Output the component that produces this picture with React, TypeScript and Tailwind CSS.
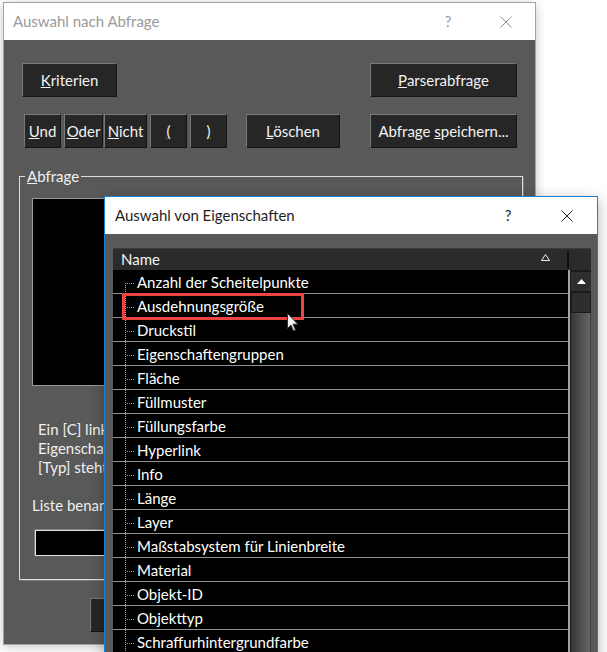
import type { ReactNode } from "react";

const PROPERTIES = [
  "Anzahl der Scheitelpunkte",
  "Ausdehnungsgröße",
  "Druckstil",
  "Eigenschaftengruppen",
  "Fläche",
  "Füllmuster",
  "Füllungsfarbe",
  "Hyperlink",
  "Info",
  "Länge",
  "Layer",
  "Maßstabsystem für Linienbreite",
  "Material",
  "Objekt-ID",
  "Objekttyp",
  "Schraffurhintergrundfarbe",
  "Schraffurmuster",
];

function Btn({ className, children }: { className: string; children: ReactNode }) {
  return (
    <div
      className={`h-[34px] shrink-0 flex items-center justify-center whitespace-nowrap bg-[#262626] border border-t-[#737b7b] border-l-[#737b7b] border-r-[#141414] border-b-[#141414] text-[15px] text-[#f2f2f2] ${className}`}
    >
      <span>{children}</span>
    </div>
  );
}

function CloseIcon({ color }: { color: string }) {
  return (
    <svg width="12" height="12" viewBox="0 0 12 12">
      <path d="M0.5 0.5 L11.5 11.5 M11.5 0.5 L0.5 11.5" stroke={color} strokeWidth="1" fill="none" />
    </svg>
  );
}

function TreeLines({ first }: { first: boolean }) {
  return (
    <svg width="24" height="23" className="shrink-0">
      <line x1="12.5" y1={first ? 13 : 0} x2="12.5" y2="23" stroke="#a8a8a8" strokeDasharray="1 1" />
      <line x1="14" y1="13.5" x2="22" y2="13.5" stroke="#a8a8a8" strokeDasharray="1 1" />
    </svg>
  );
}

function QueryWindow() {
  return (
    <div className="absolute left-[3px] top-[2px] w-[533px] h-[643px] border border-[#a3a3a3] bg-[#595959] flex flex-col shadow-[0_2px_10px_rgba(0,0,0,0.22)]">
      {/* inactive title bar */}
      <div className="h-[37px] shrink-0 bg-white flex items-center pl-[9px] text-[15px] text-[#9a9a9a]">
        <span className="flex-1">Auswahl nach Abfrage</span>
        <span className="w-[10px] text-center mr-[47px]">?</span>
        <span className="mr-[23px] flex">
          <CloseIcon color="#8f8f8f" />
        </span>
      </div>

      <div className="flex justify-between pl-[18px] pr-[18px] pt-[23px]">
        <Btn className="w-[95px]">
          <u>K</u>riterien
        </Btn>
        <Btn className="w-[147px]">
          <u>P</u>arserabfrage
        </Btn>
      </div>

      <div className="flex items-center pl-[20px] pr-[18px] mt-[17px]">
        <Btn className="w-[37px]">
          <u>U</u>nd
        </Btn>
        <Btn className="w-[39px] ml-[3px]">
          <u>O</u>der
        </Btn>
        <Btn className="w-[43px] ml-[1px]">
          <u>N</u>icht
        </Btn>
        <Btn className="w-[37px] ml-[3px]">
          <u>(</u>
        </Btn>
        <Btn className="w-[37px] ml-[3px]">
          <u>)</u>
        </Btn>
        <Btn className="w-[94px] ml-[19px]">
          <u>L</u>öschen
        </Btn>
        <Btn className="w-[147px] ml-auto">
          Abfrage <u>s</u>peichern...
        </Btn>
      </div>

      <fieldset className="ml-[15px] mr-[12px] mt-[18px] h-[414px] border border-[#dedede] shadow-[1px_1px_0_#7c7c7c] flex flex-col">
        <legend className="ml-[5px] px-[2px] text-[15px] leading-[20px] text-[#f2f2f2]">
          <u>A</u>bfrage
        </legend>
        <div className="ml-[12px] mt-[12px] w-[479px] h-[188px] bg-black border border-[#9a9a9a]" />
        <div className="ml-[18px] mt-[34px] text-[15px] leading-[19px] text-[#f0f0f0] whitespace-nowrap">
          <div>Ein [C] links vom Namen zeigt an, dass es sich um eine</div>
          <div>Eigenschaft einer Kategorie handelt.</div>
          <div>[Typ] steht für den Datentyp der Eigenschaft.</div>
        </div>
        <div className="ml-[12px] mt-[19px] text-[15px] leading-[19px] text-[#f0f0f0]">Liste benannter Abfragen:</div>
        <div className="ml-[15px] mt-[15px] w-[475px] h-[26px] bg-black border border-[#e0e0e0] shadow-[-1px_-1px_0_#808080]" />
      </fieldset>

      <div className="flex gap-[10px] pl-[86px] mt-[18px]">
        <Btn className="w-[94px]">OK</Btn>
        <Btn className="w-[94px]">Abbrechen</Btn>
        <Btn className="w-[94px]">Hilfe</Btn>
      </div>
    </div>
  );
}

function PropertyWindow() {
  return (
    <div className="absolute left-[104px] top-[196px] w-[494px] h-[480px] border border-[#1b7fd6] bg-[#595959] flex flex-col shadow-[0_4px_14px_rgba(0,0,0,0.3)]">
      <div className="h-[37px] shrink-0 bg-white flex items-center pl-[10px] text-[15px] text-[#1e1e1e]">
        <span className="flex-1">Auswahl von Eigenschaften</span>
        <span className="w-[10px] text-center mr-[48px]">?</span>
        <span className="mr-[24px] flex">
          <CloseIcon color="#1e1e1e" />
        </span>
      </div>

      <div className="pt-[14px] pl-[8px] pr-[6px] flex flex-col flex-1 min-h-0">
        {/* column header */}
        <div className="h-[22px] shrink-0 flex bg-[#2b2b2b] border-t border-[#3c3c3c]">
          <div className="w-[454px] flex items-center pl-[8px] text-[15px] text-[#f4f4f4]">
            <span className="flex-1">Name</span>
            <svg width="9" height="7" viewBox="0 0 9 7" className="mr-[17px] mb-[4px]">
              <path d="M4.5 0.5 L8.5 6.5 L0.5 6.5 Z" fill="none" stroke="#f0f0f0" strokeWidth="1" />
            </svg>
          </div>
          <div className="w-[2px] my-[2px] bg-[#0e0e0e]" />
          <div className="flex-1" />
        </div>

        <div className="flex flex-1 min-h-0">
          {/* rows */}
          <div className="relative w-[455px] bg-black">
            {PROPERTIES.map((name, i) => (
              <div key={name} className="h-[24px] flex border-b border-[#909090]">
                <TreeLines first={i === 0} />
                <span className="pt-[2px] text-[15px] leading-[21px] text-white whitespace-nowrap">{name}</span>
              </div>
            ))}
            <div className="absolute left-[9px] top-[23px] w-[182px] h-[27px] border-[3px] border-[#ec4343]" />
            <svg width="12" height="19" viewBox="0 0 12 19" className="absolute left-[174px] top-[43px]">
              <path d="M0.5 0.5 L0.5 15.5 L4 12 L6.5 18 L8.5 17 L6 11.2 L10.8 11.2 Z" fill="#f2f2f2" stroke="#303030" strokeWidth="1" />
            </svg>
          </div>
          <div className="w-[2px] bg-[#a2a2a2]" />
          {/* scrollbar */}
          <div className="w-[21px] bg-[#1c1c1c] flex flex-col pl-[1px] pt-[2px]">
            <div className="h-[19px] bg-[#2e2e2e] flex items-center justify-center">
              <svg width="9" height="5" viewBox="0 0 9 5">
                <path d="M4.5 0 L9 5 L0 5 Z" fill="#ffffff" />
              </svg>
            </div>
            <div className="h-[21px] mt-[1px] bg-[#2e2e2e] border border-[#1a1a1a]" />
            <div className="flex-1 bg-gradient-to-r from-[#363636] to-[#666666] border-r border-[#3a3a3a]" />
          </div>
        </div>
      </div>
    </div>
  );
}

export default function App() {
  return (
    <div className="relative w-[607px] h-[652px] overflow-hidden bg-white font-['Lato',sans-serif]">
      <QueryWindow />
      <PropertyWindow />
    </div>
  );
}
